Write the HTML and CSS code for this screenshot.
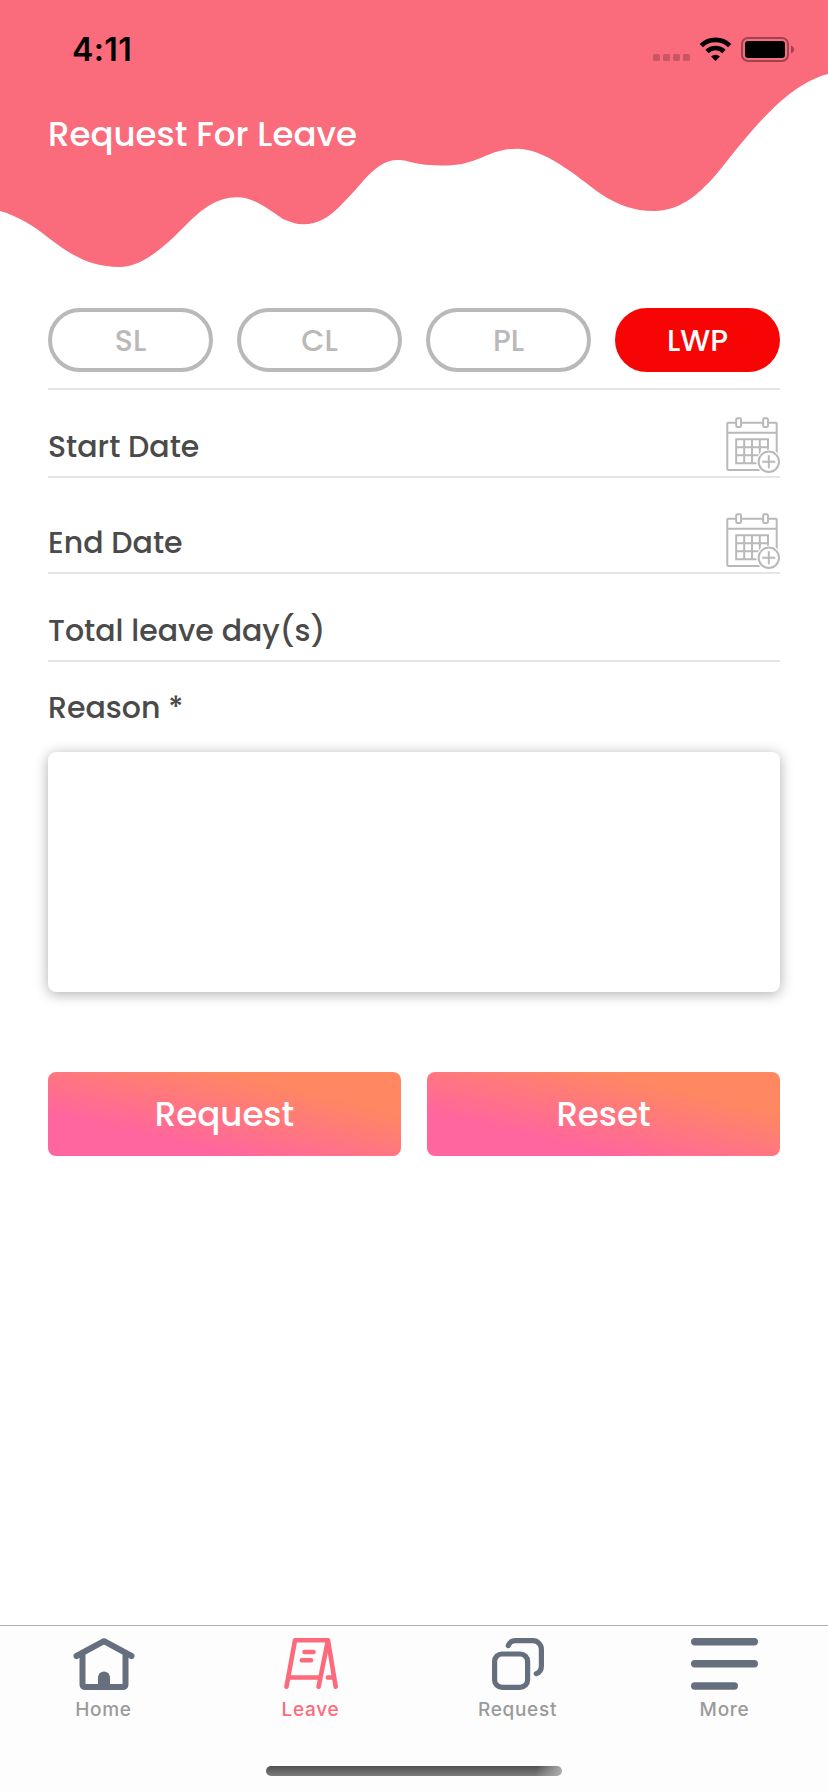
FILE: index.html
```html
<!DOCTYPE html>
<html lang="en">
<head>
<meta charset="utf-8">
<title>Request For Leave</title>
<link rel="stylesheet" href="styles.css">
</head>
<body>
<svg class="defs" width="0" height="0" aria-hidden="true">
  <symbol id="calendar" viewBox="0 0 54 56">
    <g fill="none" stroke="#b9b9b9" stroke-width="2">
      <rect x="1.3" y="5.7" width="49.4" height="47.2" rx="0.8"/>
      <path d="M1 15.8h50"/>
      <rect x="10.2" y="1.3" width="4.8" height="8.6" rx="1.2" fill="#fff"/>
      <rect x="37.2" y="1.3" width="4.8" height="8.6" rx="1.2" fill="#fff"/>
      <path d="M10.2 22.2h31.8v24h-31.8zM18.2 22v24M26 22v24M33.8 22v24M10 30.2h32M10 38.2h32"/>
    </g>
    <circle cx="42.8" cy="44.8" r="12.4" fill="#fff"/>
    <g fill="none" stroke="#b9b9b9" stroke-width="2">
      <circle cx="42.8" cy="44.8" r="10.2"/>
      <path d="M36.3 44.8h13M42.8 38.3v13"/>
    </g>
  </symbol>
</svg>
<div class="screen">
  <svg class="wave" viewBox="0 0 828 270" aria-hidden="true">
    <path fill="#fa6b7b" d="M0 0V211C18 216 34 226 50 239C57 244 65 250 72 254C86 262 101 267 120 267C133 267 146 260 160 249C170 241 178 233 187 224C202 209 217 197.3 237 197.3C254 197.3 268 209 283 219C290 222 296 224.3 303 224.3C318 224.3 330 217 343 203C350 196 357 188 363 181C375 168 384 160 398 160C410 160 412 165.5 446 165.5C478 165.5 488 148.7 517 148.7C545 148.7 575 175 601 194C618 205 634 211 654 211C682 211 703 192 727 161C745 138 766 113 787 96C801 85 815 77 828 74V0Z"/>
  </svg>
  <header class="status">
    <span class="time">4:11</span>
    <svg class="indicators" width="142" height="26" viewBox="0 0 142 26" aria-hidden="true">
      <g fill="#c95662">
        <rect x="0" y="17" width="7" height="7" rx="1.6"/><rect x="10" y="17" width="7" height="7" rx="1.6"/>
        <rect x="20" y="17" width="7" height="7" rx="1.6"/><rect x="30" y="17" width="7" height="7" rx="1.6"/>
      </g>
      <g fill="none" stroke="#000" stroke-width="4.6">
        <path d="M48.3 8.6A20.4 20.4 0 0 1 76.7 8.6"/>
        <path d="M54 14.5A12.2 12.2 0 0 1 71 14.5"/>
      </g>
      <path d="M62.5 24l-4.4-4.4a6.3 6.3 0 0 1 8.8 0z"/>
      <rect x="89" y="1" width="46" height="23" rx="6" fill="none" stroke="#9d4350" stroke-width="2"/>
      <rect x="92" y="4" width="40" height="17" rx="3.2"/>
      <path fill="#9d4350" d="M138 8.500c4 1.400 4 6.600 0 8z"/>
    </svg>
  </header>
  <h1 class="title">Request For Leave</h1>
  <main class="form">
    <div class="types">
      <button class="pill">SL</button>
      <button class="pill">CL</button>
      <button class="pill">PL</button>
      <button class="pill active">LWP</button>
    </div>
    <div class="field start"><span>Start Date</span><svg class="cal"><use href="#calendar"/></svg></div>
    <div class="field end"><span>End Date</span><svg class="cal"><use href="#calendar"/></svg></div>
    <div class="field total"><span>Total leave day(s)</span></div>
    <label class="reason" for="reason">Reason *</label>
    <textarea class="box" id="reason"></textarea>
    <div class="actions">
      <button class="cta">Request</button>
      <button class="cta">Reset</button>
    </div>
  </main>
  <nav class="tabs">
    <a class="tab">
      <svg width="62" height="52" viewBox="0 0 62 52" fill="none" stroke="#666f7d" stroke-width="6" stroke-linecap="round" stroke-linejoin="round">
        <path d="M3.500 18L31 3.200L58.500 18"/>
        <path d="M9.500 17.500V46.500a2.500 2.500 0 0 0 2.500 2.500H50a2.500 2.500 0 0 0 2.500-2.500V17.500"/>
        <path d="M25 50V39.500a6 6 0 0 1 12 0V50z" fill="#666f7d" stroke="none"/>
      </svg>
      <span>Home</span>
    </a>
    <a class="tab on">
      <svg width="54" height="52" viewBox="0 0 54 52" fill="none" stroke="#fb6b7b" stroke-width="4.600" stroke-linecap="round" stroke-linejoin="round">
        <path d="M2.500 48.700L11 2.300H44L51.700 48.700M44 2.300L34.600 48.700M5 39.500H36M43.800 39.500H49.500M20.500 14H29.500M17.800 22.300H27"/>
      </svg>
      <span>Leave</span>
    </a>
    <a class="tab">
      <svg width="52" height="52" viewBox="0 0 52 52" fill="none" stroke="#666f7d" stroke-width="5.200" stroke-linecap="round">
        <rect x="2.600" y="16" width="33" height="33.400" rx="7.500"/>
        <path d="M16.300 7.600C17.500 4.500 20 2.700 23.500 2.700H41a8.500 8.500 0 0 1 8.400 8.500V28C49.400 32 47.500 34.500 44.300 35.600"/>
      </svg>
      <span>Request</span>
    </a>
    <a class="tab">
      <svg width="67" height="52" viewBox="0 0 67 52" fill="none" stroke="#666f7d" stroke-width="7.400" stroke-linecap="round">
        <path d="M3.700 3.700H63.300M3.700 25.800H63.300M3.700 48H43.300"/>
      </svg>
      <span>More</span>
    </a>
    <div class="home-bar"></div>
  </nav>
</div>
</body>
</html>
```
FILE: styles.css
```css
* { box-sizing: border-box; }
body { margin: 0; background: #fff; }
button { font: inherit; padding: 0; cursor: pointer; }
.defs { position: absolute; }
.screen {
  position: relative;
  width: 828px;
  height: 1792px;
  display: flex;
  flex-direction: column;
  background: #fff;
  overflow: hidden;
  font-family: Poppins, Inter, sans-serif;
  font-weight: 500;
  color: #4a4a4a;
}
.wave { position: absolute; top: 0; left: 0; width: 828px; height: 270px; }
.status {
  position: relative;
  height: 99px;
  padding: 0 33px 0 72px;
  display: flex;
  align-items: center;
  justify-content: space-between;
  color: #000;
}
.time { font: 600 32px/40px Inter, sans-serif; letter-spacing: 0.4px; }
.title {
  position: relative;
  margin: 0;
  padding-left: 48px;
  font-size: 34px;
  line-height: 70px;
  font-weight: 500;
  color: #fff;
}
.form { display: flex; flex-direction: column; padding: 139px 48px 0; }
.types {
  display: grid;
  grid-template-columns: repeat(4, 1fr);
  gap: 24px;
  padding-bottom: 16px;
  border-bottom: 2px solid #e5e5e5;
}
.pill {
  height: 64px;
  border: 4px solid #b9b9b9;
  border-radius: 32px;
  background: #fff;
  color: #b9b9b9;
  font-size: 30px;
  line-height: 57px;
}
.pill.active { background: #f70505; border-color: #f70505; color: #fff; }
.field {
  display: flex;
  justify-content: space-between;
  align-items: flex-end;
  border-bottom: 2px solid #e5e5e5;
  font-size: 30px;
  line-height: 58px;
}
.start { height: 88px; }
.end { height: 96px; }
.total { height: 88px; }
.cal { width: 54px; height: 56px; margin-bottom: 3px; }
.reason { height: 90px; font-size: 30px; line-height: 92px; }
.box {
  height: 240px;
  border: 0;
  border-radius: 8px;
  background: #fff;
  box-shadow: 0 2px 14px rgba(0, 0, 0, 0.32);
  resize: none;
  outline: 0;
}
.actions { display: grid; grid-template-columns: 1fr 1fr; gap: 26px; margin-top: 80px; }
.cta {
  height: 84px;
  border: 0;
  border-radius: 8px;
  background: linear-gradient(to top right, #ff659f 25%, #ff8762 75%);
  color: #fff;
  font-size: 34px;
  line-height: 84px;
}
.tabs {
  position: relative;
  height: 167px;
  margin-top: auto;
  padding-top: 12px;
  display: grid;
  grid-template-columns: repeat(4, 1fr);
  align-items: start;
  border-top: 1px solid #b0b0b0;
  background: #fdfdfd;
}
.tab {
  display: flex;
  flex-direction: column;
  align-items: center;
  gap: 8px;
  color: #9a9a9a;
  font: 500 19px/24px Inter, sans-serif;
  letter-spacing: 0.7px;
}
.tab.on { color: #fb6b7b; }
.home-bar {
  position: absolute;
  left: 266px;
  top: 140px;
  width: 296px;
  height: 10px;
  border-radius: 5px;
  background: linear-gradient(100deg, transparent 91%, #b0b0b0 100%), linear-gradient(#505050, #7c7c7c);
}
```
